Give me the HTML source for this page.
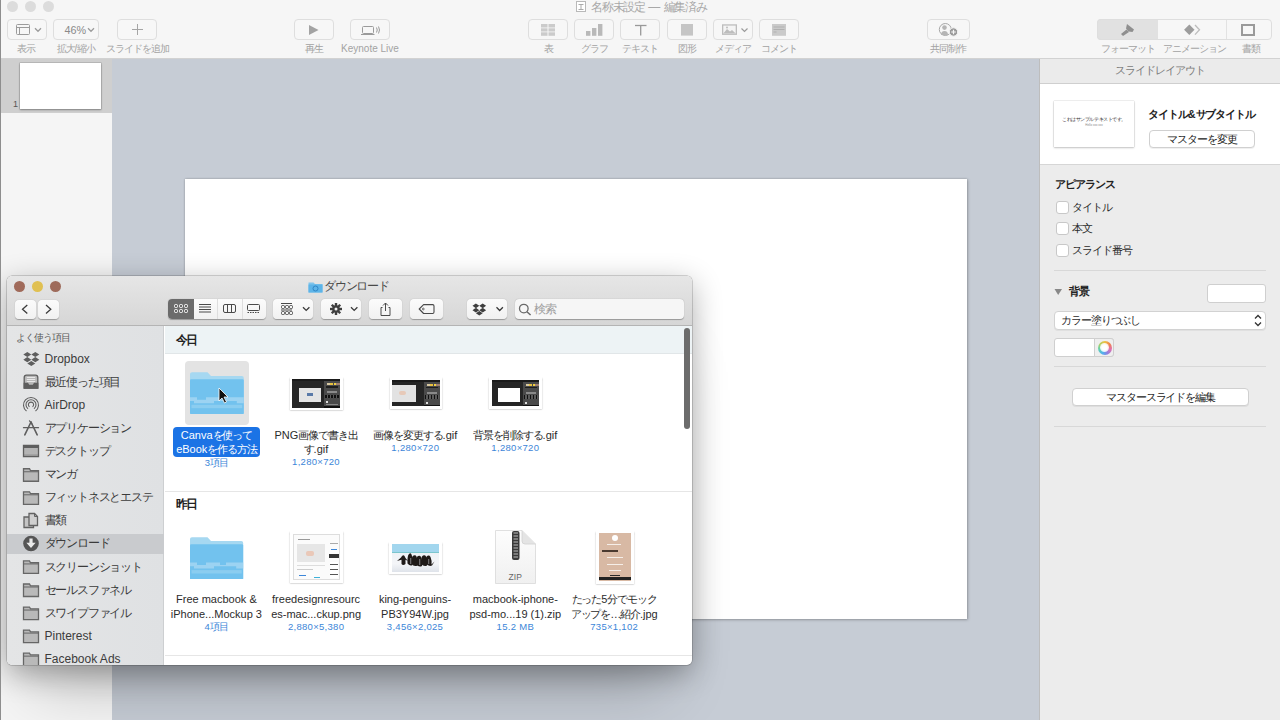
<!DOCTYPE html>
<html><head><meta charset="utf-8">
<style>
*{box-sizing:border-box;margin:0;padding:0}
html,body{width:1280px;height:720px;overflow:hidden}
body{position:relative;background:#c6ccd5;font-family:"Liberation Sans",sans-serif;color:#222}
.a{position:absolute}
.j{letter-spacing:-0.1em}
/* keynote toolbar */
#tb{left:0;top:0;width:1280px;height:59px;background:#f6f6f6;border-bottom:1px solid #d2d2d2}
#lborder{left:0;top:0;width:1px;height:720px;background:#8e8e8e;z-index:50}
.tl{width:11px;height:11px;border-radius:50%;background:#dcdcdc;top:1px}
.btn{height:21px;top:19px;border:1px solid #dedede;border-radius:4px;background:#f7f7f7}
.lbl{top:42px;font-size:10px;color:#a3a3a3;white-space:nowrap;text-align:center;line-height:13px}
#title{left:591px;top:0;font-size:12px;color:#a8a8a8;line-height:14px;white-space:nowrap}
/* navigator */
#nav{left:1px;top:59px;width:111px;height:661px;background:#f5f5f5}
#navsel{left:1px;top:59px;width:111px;height:54px;background:#cfcfcf}
#thumb{left:20px;top:63px;width:81px;height:46px;background:#fff;box-shadow:0 0 0 0.5px rgba(0,0,0,.2),0 1px 2px rgba(0,0,0,.3)}
/* inspector */
#insp{left:1039px;top:59px;width:241px;height:661px;background:#ececec;border-left:1px solid #bdbdbd}
#inhead{left:1040px;top:59px;width:240px;height:25px;background:#ebebeb;border-bottom:1px solid #cfcfcf;font-size:11px;color:#7a7a7a;text-align:center;line-height:23px}
#inwhite{left:1040px;top:84px;width:240px;height:81px;background:#fff;border-bottom:1px solid #d6d6d6}
.sep{height:1px;background:#d8d8d8}
.cb{width:13px;height:13px;border:1px solid #c8c8c8;border-radius:3px;background:#fff}
.ilbl{font-size:11px;color:#2a2a2a;white-space:nowrap;line-height:13px}
.ibtn{background:#fff;border:1px solid #d0d0d0;border-radius:4px;font-size:11px;color:#222;text-align:center;box-shadow:0 1px 0 rgba(0,0,0,.06)}
/* slide */
#slide{left:185px;top:179px;width:782px;height:440px;background:#fff;box-shadow:0 0 2px rgba(0,0,0,.25),1px 1px 3px rgba(0,0,0,.2)}
</style></head><body>
<div id="lborder" class="a"></div>
<div id="tb" class="a"></div>
<div class="a tl" style="left:7px"></div>
<div class="a tl" style="left:25px"></div>
<div class="a tl" style="left:43px"></div>
<div id="title" class="a"><span class="j">名称未設定</span> — <span class="j">編集済み</span></div>

<div class="a btn" style="left:7px;width:40px"></div>
<div class="a btn" style="left:53px;width:46px"></div>
<div class="a btn" style="left:117px;width:40px"></div>
<div class="a lbl" style="left:6px;width:40px"><span class="j">表示</span></div>
<div class="a lbl" style="left:46px;width:60px"><span class="j">拡大</span>/<span class="j">縮小</span></div>
<div class="a lbl" style="left:97px;width:80px"><span class="j">スライドを追加</span></div>

<div class="a btn" style="left:294px;width:40px"></div>
<div class="a btn" style="left:350px;width:40px"></div>
<div class="a lbl" style="left:294px;width:40px"><span class="j">再生</span></div>
<div class="a lbl" style="left:330px;width:80px">Keynote Live</div>

<div class="a btn" style="left:528px;width:40px"></div>
<div class="a btn" style="left:574px;width:40px"></div>
<div class="a btn" style="left:620px;width:40px"></div>
<div class="a btn" style="left:667px;width:40px"></div>
<div class="a btn" style="left:713px;width:40px"></div>
<div class="a btn" style="left:759px;width:40px"></div>
<div class="a lbl" style="left:528px;width:40px"><span class="j">表</span></div>
<div class="a lbl" style="left:564px;width:60px"><span class="j">グラフ</span></div>
<div class="a lbl" style="left:610px;width:60px"><span class="j">テキスト</span></div>
<div class="a lbl" style="left:657px;width:60px"><span class="j">図形</span></div>
<div class="a lbl" style="left:703px;width:60px"><span class="j">メディア</span></div>
<div class="a lbl" style="left:749px;width:60px"><span class="j">コメント</span></div>

<div class="a btn" style="left:927px;width:43px"></div>
<div class="a lbl" style="left:918px;width:60px"><span class="j">共同制作</span></div>

<div class="a btn" style="left:1097px;width:175px"></div>
<div class="a lbl" style="left:1093px;width:70px"><span class="j">フォーマット</span></div>
<div class="a lbl" style="left:1154px;width:80px"><span class="j">アニメーション</span></div>
<div class="a lbl" style="left:1226px;width:50px"><span class="j">書類</span></div>


<div class="a" style="left:1097px;top:19px;width:61px;height:21px;background:#e1e1e1;border:1px solid #dedede;border-right:none;border-radius:4px 0 0 4px"></div>
<!-- toolbar icons -->
<svg class="a" style="left:0;top:0" width="1280" height="58" viewBox="0 0 1280 58">
 <g fill="none" stroke="#9b9b9b" stroke-width="1">
  <!-- <span class="j">表示</span> -->
  <rect x="16.5" y="24.5" width="13" height="10" rx="1"/>
  <line x1="16.5" y1="27.5" x2="29.5" y2="27.5"/>
  <line x1="19.5" y1="27.5" x2="19.5" y2="34.5"/>
  <polyline points="35,28.3 38,31.3 41,28.3" stroke-width="1.3"/>
  <!-- 46% chevron -->
  <polyline points="88,28.3 91,31.3 94,28.3" stroke-width="1.3"/>
  <!-- plus -->
  <line x1="137.5" y1="24" x2="137.5" y2="35" stroke="#a5a5a5"/>
  <line x1="132" y1="29.5" x2="143" y2="29.5" stroke="#a5a5a5"/>
  <!-- keynote live laptop -->
  <rect x="362.5" y="26.5" width="11" height="7" rx="1"/>
  <line x1="361" y1="34.5" x2="374.5" y2="34.5"/>
  <path d="M376.5 27.5 Q378 30 376.5 32.5" />
  <path d="M378.5 26.5 Q380.5 30 378.5 33.5" />
  <!-- T -->
  <line x1="635" y1="25.5" x2="646.5" y2="25.5" stroke="#999" stroke-width="1.3"/>
  <line x1="640.7" y1="25.5" x2="640.7" y2="35.5" stroke="#999" stroke-width="1.3"/>
  <!-- media chevron -->
  <polyline points="741.5,28.5 744.5,31.5 747.5,28.5" stroke-width="1.2"/>
  <!-- <span class="j">書類</span> -->
  <rect x="1242" y="25" width="12" height="10" stroke="#9a9a9a" stroke-width="2"/>
  <!-- collab -->
  <circle cx="945.3" cy="29.5" r="6" stroke="#a8a8a8"/>
 </g>
 <!-- play -->
 <path d="M309 25 L318.5 30 L309 35 Z" fill="#a3a3a3"/>
 <!-- <span class="j">表</span> grid -->
 <g fill="#cbcbcb">
  <rect x="541" y="24" width="6.5" height="3.5"/><rect x="548.5" y="24" width="6.5" height="3.5"/>
  <rect x="541" y="28.3" width="6.5" height="3.2"/><rect x="548.5" y="28.3" width="6.5" height="3.2"/>
  <rect x="541" y="32.3" width="6.5" height="3.5"/><rect x="548.5" y="32.3" width="6.5" height="3.5"/>
 </g>
 <!-- graph bars -->
 <g fill="#b9b9b9">
  <rect x="586" y="31" width="4.4" height="4.8"/>
  <rect x="592" y="28" width="4.4" height="7.8"/>
  <rect x="598" y="24" width="4.4" height="11.8"/>
 </g>
 <!-- shape -->
 <rect x="681" y="24" width="12" height="11.6" fill="#c5c5c5"/>
 <!-- media -->
 <rect x="722" y="24.3" width="15" height="10.6" fill="#bdbdbd"/>
 <rect x="723.3" y="25.6" width="12.4" height="8" fill="#f4f4f4"/>
 <path d="M723.3 33.6 L727 29 L730 31.5 L732 30 L735.7 33.6 Z" fill="#bdbdbd"/>
 <circle cx="727" cy="27.6" r="1" fill="#bdbdbd"/>
 <!-- comment -->
 <rect x="772" y="24" width="14" height="11.8" fill="#cacaca"/>
 <g fill="#b0b0b0"><rect x="773.5" y="26.5" width="11" height="1"/><rect x="773.5" y="29" width="11" height="1"/><rect x="773.5" y="31.5" width="3" height="1"/></g>
 <!-- collab person -->
 <circle cx="944.5" cy="27.6" r="2.3" fill="#b5b5b5"/>
 <path d="M941 35 Q941 31 944.5 31 Q948 31 948 35 Z" fill="#b5b5b5"/>
 <circle cx="953.5" cy="32" r="4.2" fill="#9a9a9a" stroke="#f6f6f6" stroke-width="1"/>
 <path d="M953.5 29.7 V34.3 M951.2 32 H955.8" stroke="#f6f6f6" stroke-width="1.2"/>
 <!-- paintbrush -->
 <g fill="#8f8f8f">
  <path d="M1127 24 L1134 29.5 L1132.5 32 L1128.5 31.5 L1126 28.5 Z"/>
  <path d="M1126.5 29.5 L1129 32 L1123 36 L1121 34 Z"/>
 </g>
 <!-- diamond -->
 <path d="M1189.3 24.6 L1194.5 29.8 L1189.3 35 L1184.1 29.8 Z" fill="#9d9d9d"/>
 <polyline points="1195,25 1199.5,29.8 1195,34.6" fill="none" stroke="#bdbdbd" stroke-width="1.3"/>
 <!-- title doc icon -->
 <rect x="576.5" y="1.5" width="9" height="10" fill="#fff" stroke="#b9b9b9"/>
 <path d="M578.5 4.5 h5 M581 4.5 v5 M578.5 9.5 h5" stroke="#aaa" stroke-width="1" fill="none"/>
</svg>
<div class="a" style="left:64.5px;top:23.5px;font-size:10.8px;color:#8a8a8a;line-height:13px">46%</div>
<div class="a" style="left:1226px;top:20px;width:1px;height:19px;background:#e2e2e2"></div>

<div id="nav" class="a"></div>
<div id="navsel" class="a"></div>
<div id="thumb" class="a"></div>
<div class="a" style="left:13px;top:100px;font-size:9px;color:#555;line-height:9px">1</div>

<div id="insp" class="a"></div>
<div id="inhead" class="a"><span class="j">スライドレイアウト</span></div>
<div id="inwhite" class="a"></div>


<!-- inspector content -->
<div class="a" style="left:1054px;top:101px;width:80px;height:46px;background:#fff;box-shadow:0 0 1px rgba(0,0,0,.35),0 1px 2px rgba(0,0,0,.2)"></div>
<div class="a" style="left:1054px;top:117px;width:80px;text-align:center;font-size:4.5px;color:#333;line-height:6px;white-space:nowrap"><span class="j">これはサンプルテキストです。</span></div>
<div class="a" style="left:1054px;top:123px;width:80px;text-align:center;font-size:3px;color:#888;line-height:4px">Hello xxx xxx</div>
<div class="a ilbl" style="left:1148px;top:106.5px;font-size:10.8px;font-weight:bold;color:#222;line-height:14px"><span class="j">タイトル</span>&amp;<span class="j">サブタイトル</span></div>
<div class="a ibtn" style="left:1149px;top:130px;width:106px;height:18px;line-height:16px"><span class="j">マスターを変更</span></div>

<div class="a ilbl" style="left:1055px;top:178px;font-weight:bold;color:#222"><span class="j">アピアランス</span></div>
<div class="a cb" style="left:1056px;top:201px"></div>
<div class="a ilbl" style="left:1072px;top:201px"><span class="j">タイトル</span></div>
<div class="a cb" style="left:1056px;top:222px"></div>
<div class="a ilbl" style="left:1072px;top:222px"><span class="j">本文</span></div>
<div class="a cb" style="left:1056px;top:244px"></div>
<div class="a ilbl" style="left:1072px;top:244px"><span class="j">スライド番号</span></div>
<div class="a sep" style="left:1054px;top:270px;width:212px"></div>

<svg class="a" style="left:1054px;top:288px" width="9" height="8"><path d="M0.5 1 L8 1 L4.2 7 Z" fill="#888"/></svg>
<div class="a ilbl" style="left:1069px;top:285px;font-weight:bold;color:#222"><span class="j">背景</span></div>
<div class="a" style="left:1207px;top:284px;width:59px;height:19px;background:#fff;border:1px solid #cfcfcf;border-radius:3px"></div>
<div class="a" style="left:1054px;top:311px;width:212px;height:19px;background:#fff;border:1px solid #d2d2d2;border-radius:4px;box-shadow:0 1px 0 rgba(0,0,0,.05)"></div>
<div class="a ilbl" style="left:1061px;top:314px"><span class="j">カラー塗りつぶし</span></div>
<svg class="a" style="left:1253px;top:313px" width="10" height="15"><polyline points="2,5.5 5,2.5 8,5.5" fill="none" stroke="#333" stroke-width="1.3"/><polyline points="2,9.5 5,12.5 8,9.5" fill="none" stroke="#333" stroke-width="1.3"/></svg>
<div class="a" style="left:1054px;top:338px;width:60px;height:19px;background:#fff;border:1px solid #cfcfcf;border-radius:3px"></div>
<div class="a" style="left:1094px;top:338px;width:20px;height:19px;background:#efefef;border:1px solid #cfcfcf;border-radius:0 3px 3px 0"></div>
<div class="a" style="left:1097.5px;top:340.5px;width:14px;height:14px;border-radius:50%;background:conic-gradient(#f0c040,#f08050,#e070b0,#9080e0,#50b0f0,#60d0b0,#b0d060,#f0c040)"></div><div class="a" style="left:1100px;top:343px;width:9px;height:9px;border-radius:50%;background:radial-gradient(#fff 40%,rgba(255,255,255,.6))"></div>
<div class="a sep" style="left:1054px;top:366px;width:212px"></div>
<div class="a ibtn" style="left:1072px;top:388px;width:177px;height:18px;line-height:16px"><span class="j">マスタースライドを編集</span></div>
<div class="a sep" style="left:1054px;top:426px;width:212px"></div>

<div id="slide" class="a"></div>
<!--FINDER-->
<div id="fw" class="a" style="left:7px;top:276px;width:685px;height:389px;border-radius:5px 5px 5px 5px;overflow:hidden;box-shadow:0 0 0 0.5px rgba(0,0,0,.3),0 8px 30px rgba(0,0,0,.32),0 50px 60px -25px rgba(0,0,0,.2);background:#fff">
<div class="a" style="left:0;top:0;width:685px;height:50px;background:linear-gradient(#e6e6e6,#d6d6d6);border-bottom:1px solid #b4b4b4"></div>
<div class="a" style="left:6.9px;top:5.2px;width:11px;height:11px;border-radius:50%;background:#a06a5a"></div>
<div class="a" style="left:24.9px;top:5.2px;width:11px;height:11px;border-radius:50%;background:#e0c052"></div>
<div class="a" style="left:42.7px;top:5.2px;width:11px;height:11px;border-radius:50%;background:#9e6b5b"></div>
<svg class="a" style="left:300.5px;top:4.5px" width="15" height="12"><path d="M0.5 1.5 h5 l1.5 1.5 h7.5 v8.5 h-14 Z" fill="#7fc4ec"/><path d="M0.5 3.5 h14 v8 h-14 Z" fill="#5db4e8"/><circle cx="7.5" cy="7.5" r="2.5" fill="none" stroke="#2f86c6" stroke-width="1"/></svg>
<div class="a" style="left:317px;top:3px;font-size:12px;line-height:14px;color:#4a4a4a;white-space:nowrap"><span class="j">ダウンロード</span></div>
<div class="a" style="left:7.5px;top:23.5px;width:21px;height:19px;background:linear-gradient(#fbfbfb,#f1f1f1);border-radius:4px;box-shadow:0 0.5px 1px rgba(0,0,0,.3)"></div>
<div class="a" style="left:31px;top:23.5px;width:21px;height:19px;background:linear-gradient(#fbfbfb,#f1f1f1);border-radius:4px;box-shadow:0 0.5px 1px rgba(0,0,0,.3)"></div>
<svg class="a" style="left:0;top:0" width="685" height="50"><g fill="none" stroke="#3c3c3c" stroke-width="1.3"><polyline points="20.3,29 15.5,33.3 20.3,37.6"/><polyline points="39,29 43.8,33.3 39,37.6"/></g></svg>
<div class="a" style="left:161px;top:23px;width:97.5px;height:19.5px;background:linear-gradient(#fbfbfb,#f1f1f1);border-radius:4px;box-shadow:0 0.5px 1px rgba(0,0,0,.3)"></div>
<div class="a" style="left:161px;top:23px;width:25.5px;height:19.5px;background:#6b6b6b;border-radius:4px 0 0 4px"></div>
<div class="a" style="left:210.4px;top:23px;width:1px;height:19.5px;background:#dedede"></div>
<div class="a" style="left:234.5px;top:23px;width:1px;height:19.5px;background:#dedede"></div>
<div class="a" style="left:266.2px;top:23px;width:40.3px;height:19.5px;background:linear-gradient(#fbfbfb,#f1f1f1);border-radius:4px;box-shadow:0 0.5px 1px rgba(0,0,0,.3)"></div>
<div class="a" style="left:314.2px;top:23px;width:40.3px;height:19.5px;background:linear-gradient(#fbfbfb,#f1f1f1);border-radius:4px;box-shadow:0 0.5px 1px rgba(0,0,0,.3)"></div>
<div class="a" style="left:362.3px;top:23px;width:32.7px;height:19.5px;background:linear-gradient(#fbfbfb,#f1f1f1);border-radius:4px;box-shadow:0 0.5px 1px rgba(0,0,0,.3)"></div>
<div class="a" style="left:403px;top:23px;width:33px;height:19.5px;background:linear-gradient(#fbfbfb,#f1f1f1);border-radius:4px;box-shadow:0 0.5px 1px rgba(0,0,0,.3)"></div>
<div class="a" style="left:459.8px;top:23px;width:40px;height:19.5px;background:linear-gradient(#fbfbfb,#f1f1f1);border-radius:4px;box-shadow:0 0.5px 1px rgba(0,0,0,.3)"></div>
<div class="a" style="left:508.3px;top:23px;width:169px;height:19.5px;background:#f6f6f6;border-radius:4px;box-shadow:0 0.5px 1px rgba(0,0,0,.3)"></div>
<div class="a" style="left:527px;top:25.5px;font-size:11.5px;line-height:14px;color:#a0a0a0"><span class="j">検索</span></div>
<svg class="a" style="left:0;top:0" width="685" height="50">
 <g fill="none" stroke="#fff" stroke-width="1">
  <rect x="167.5" y="28.5" width="3" height="3" rx="1"/><rect x="172.5" y="28.5" width="3" height="3" rx="1"/><rect x="177.5" y="28.5" width="3" height="3" rx="1"/>
  <rect x="167.5" y="33.5" width="3" height="3" rx="1"/><rect x="172.5" y="33.5" width="3" height="3" rx="1"/><rect x="177.5" y="33.5" width="3" height="3" rx="1"/>
 </g>
 <g fill="none" stroke="#4a4a4a" stroke-width="1">
  <line x1="192" y1="28.5" x2="204" y2="28.5"/><line x1="192" y1="31" x2="204" y2="31"/><line x1="192" y1="33.5" x2="204" y2="33.5"/><line x1="192" y1="36" x2="204" y2="36"/>
  <rect x="216.5" y="28.5" width="12" height="8" rx="1.5"/><line x1="220.5" y1="28.5" x2="220.5" y2="36.5"/><line x1="224.5" y1="28.5" x2="224.5" y2="36.5"/>
  <rect x="240.5" y="28.5" width="12" height="6" rx="1"/><line x1="240.5" y1="36.5" x2="252.5" y2="36.5" stroke-dasharray="1.5 1"/>
  <line x1="274" y1="27.5" x2="285" y2="27.5"/>
  <rect x="274.5" y="29.5" width="3" height="3" rx="1"/><rect x="278.5" y="29.5" width="3" height="3" rx="1"/><rect x="282.5" y="29.5" width="3" height="3" rx="1"/>
  <line x1="274" y1="34" x2="285" y2="34"/>
  <rect x="274.5" y="35.5" width="3" height="3" rx="1"/><rect x="278.5" y="35.5" width="3" height="3" rx="1"/><rect x="282.5" y="35.5" width="3" height="3" rx="1"/>
  <polyline points="296,31.2 299.2,34.4 302.4,31.2" stroke-width="1.3" stroke="#3a3a3a"/>
  <polyline points="344,31.2 347.2,34.4 350.4,31.2" stroke-width="1.3" stroke="#3a3a3a"/>
  <path d="M375.5 31.5 h-1.5 v8 h9 v-8 h-1.5" />
  <line x1="378.5" y1="27" x2="378.5" y2="35"/>
  <polyline points="376,29.5 378.5,27 381,29.5"/>
  <path d="M412.2 33 L416.6 28.6 H425.6 Q427 28.6 427 30 V36.1 Q427 37.5 425.6 37.5 H416.6 Z" stroke-linejoin="round" stroke-width="1.1"/><circle cx="416.3" cy="33" r="0.9" stroke-width="0.8"/>
  <polyline points="489.5,31.3 492.7,34.5 495.9,31.3" stroke-width="1.3" stroke="#3a3a3a"/>
  <circle cx="516.8" cy="32.6" r="4.3" stroke="#6a6a6a" stroke-width="1.3"/><line x1="519.9" y1="35.7" x2="523.6" y2="39" stroke="#6a6a6a" stroke-width="1.5"/>
 </g>
 <g fill="#3f3f3f">
  <circle cx="329" cy="33" r="3.8"/>
  <g transform="translate(329 33)">
   <rect x="-1.2" y="-6" width="2.4" height="12"/><rect x="-1.2" y="-6" width="2.4" height="12" transform="rotate(45)"/><rect x="-1.2" y="-6" width="2.4" height="12" transform="rotate(90)"/><rect x="-1.2" y="-6" width="2.4" height="12" transform="rotate(135)"/>
  </g>
  <path d="M465.5 29.8 l3.4 -2.4 l3.4 2.4 l-3.4 2.4 Z M472.3 29.8 l3.4 -2.4 l3.4 2.4 l-3.4 2.4 Z M465.5 34.2 l3.4 -2.4 l3.4 2.4 l-3.4 2.4 Z M472.3 34.2 l3.4 -2.4 l3.4 2.4 l-3.4 2.4 Z M468.9 37.2 l3.4 -2.2 l3.4 2.2 l-3.4 2.2 Z"/>
 </g>
 <circle cx="329" cy="33" r="1.5" fill="#f3f3f3"/>
</svg>
<div class="a" style="left:0;top:50px;width:157px;height:339px;background:linear-gradient(90deg,#e4e5e6,#dfe1e3);border-right:1px solid #cdcfd1"></div>
<div class="a" style="left:9px;top:56px;font-size:10px;line-height:12px;color:#5a5a5a;white-space:nowrap"><span class="j">よく使う項目</span></div>
<div class="a" style="left:0;top:257.5px;width:157px;height:20.5px;background:#c9cbce"></div>
<div class="a" style="left:37.5px;top:76.0px;font-size:12px;line-height:15px;color:#3b3b3b;white-space:nowrap">Dropbox</div>
<div class="a" style="left:37.5px;top:99.1px;font-size:12px;line-height:15px;color:#3b3b3b;white-space:nowrap"><span class="j">最近使った項目</span></div>
<div class="a" style="left:37.5px;top:122.1px;font-size:12px;line-height:15px;color:#3b3b3b;white-space:nowrap">AirDrop</div>
<div class="a" style="left:37.5px;top:145.1px;font-size:12px;line-height:15px;color:#3b3b3b;white-space:nowrap"><span class="j">アプリケーション</span></div>
<div class="a" style="left:37.5px;top:168.2px;font-size:12px;line-height:15px;color:#3b3b3b;white-space:nowrap"><span class="j">デスクトップ</span></div>
<div class="a" style="left:37.5px;top:191.2px;font-size:12px;line-height:15px;color:#3b3b3b;white-space:nowrap"><span class="j">マンガ</span></div>
<div class="a" style="left:37.5px;top:214.3px;font-size:12px;line-height:15px;color:#3b3b3b;white-space:nowrap"><span class="j">フィットネスとエステ</span></div>
<div class="a" style="left:37.5px;top:237.4px;font-size:12px;line-height:15px;color:#3b3b3b;white-space:nowrap"><span class="j">書類</span></div>
<div class="a" style="left:37.5px;top:260.4px;font-size:12px;line-height:15px;color:#3b3b3b;white-space:nowrap"><span class="j">ダウンロード</span></div>
<div class="a" style="left:37.5px;top:283.5px;font-size:12px;line-height:15px;color:#3b3b3b;white-space:nowrap"><span class="j">スクリーンショット</span></div>
<div class="a" style="left:37.5px;top:306.5px;font-size:12px;line-height:15px;color:#3b3b3b;white-space:nowrap"><span class="j">セールスファネル</span></div>
<div class="a" style="left:37.5px;top:329.5px;font-size:12px;line-height:15px;color:#3b3b3b;white-space:nowrap"><span class="j">スワイプファイル</span></div>
<div class="a" style="left:37.5px;top:352.6px;font-size:12px;line-height:15px;color:#3b3b3b;white-space:nowrap">Pinterest</div>
<div class="a" style="left:37.5px;top:375.7px;font-size:12px;line-height:15px;color:#3b3b3b;white-space:nowrap">Facebook Ads</div>
<svg class="a" style="left:0;top:50px" width="157" height="339"><g fill="#5e5e5e" stroke="#5e5e5e"><path stroke="none" d="M16.3 28.5 l4 -2.6 l4 2.6 l-4 2.6 Z M24.3 28.5 l4 -2.6 l4 2.6 l-4 2.6 Z M16.3 33.7 l4 -2.6 l4 2.6 l-4 2.6 Z M24.3 33.7 l4 -2.6 l4 2.6 l-4 2.6 Z M20.3 37.5 l4 -2.6 l4 2.6 l-4 2.6 Z"/><path fill="#b8b8b8" stroke="#5e5e5e" stroke-width="1.3" d="M17.2 62.2 V51.5 Q17.2 49.2 19.5 49.2 H28.5 Q30.8 49.2 30.8 51.5 V62.2 Z"/><path stroke="none" fill="#5e5e5e" d="M16.6 56.8 h4.4 l1.2 2 h3.6 l1.2 -2 h4.4 v6 h-14.8 Z"/><path fill="none" stroke="#e8e8e8" stroke-width="1" d="M19.8 51.5 h8.4 M19.8 53.5 h8.4 M19.8 55.5 h8.4"/><g fill="none" stroke-width="1.1"><path d="M19.5 85 A7.5 7.5 0 1 1 28.5 85"/><path d="M21 82.8 A5 5 0 1 1 27 82.8"/><path d="M22.5 80.8 A2.6 2.6 0 1 1 25.5 80.8"/></g><g fill="none" stroke-width="1.6" stroke-linecap="round"><path d="M17.8 108.8 L24 96"/><path d="M24 96 L30.2 108.8"/><path d="M16.5 101.7 H31.5" stroke-width="1.3"/><path d="M22.5 94.8 L25 98" stroke-width="1.2"/></g><path fill="#b4b4b4" stroke="#5e5e5e" stroke-width="1.3" d="M16.5 119.5 h15 v11 h-15 Z"/><rect stroke="none" x="16.5" y="119.5" width="15" height="2.5"/><path fill="none" stroke="#777" stroke-width="0.8" stroke-dasharray="1 1" d="M17.5 128.8 h13"/><path fill="#b9b9b9" stroke="#666" stroke-width="1.3" d="M16.5 142.75 h6 l1 1.8 h8 v10.7 h-15 Z"/><path fill="none" stroke="#666" stroke-width="1" d="M16.5 145.75 h15"/><path fill="#b9b9b9" stroke="#666" stroke-width="1.3" d="M16.5 165.8 h6 l1 1.8 h8 v10.7 h-15 Z"/><path fill="none" stroke="#666" stroke-width="1" d="M16.5 168.8 h15"/><path fill="#b9b9b9" stroke="#666" stroke-width="1.3" d="M16.5 234.95000000000005 h6 l1 1.8 h8 v10.7 h-15 Z"/><path fill="none" stroke="#666" stroke-width="1" d="M16.5 237.95000000000005 h15"/><path fill="#b9b9b9" stroke="#666" stroke-width="1.3" d="M16.5 258.0 h6 l1 1.8 h8 v10.7 h-15 Z"/><path fill="none" stroke="#666" stroke-width="1" d="M16.5 261.0 h15"/><path fill="#b9b9b9" stroke="#666" stroke-width="1.3" d="M16.5 281.04999999999995 h6 l1 1.8 h8 v10.7 h-15 Z"/><path fill="none" stroke="#666" stroke-width="1" d="M16.5 284.04999999999995 h15"/><path fill="#b9b9b9" stroke="#666" stroke-width="1.3" d="M16.5 304.1 h6 l1 1.8 h8 v10.7 h-15 Z"/><path fill="none" stroke="#666" stroke-width="1" d="M16.5 307.1 h15"/><path fill="#b9b9b9" stroke="#666" stroke-width="1.3" d="M16.5 327.1500000000001 h6 l1 1.8 h8 v10.7 h-15 Z"/><path fill="none" stroke="#666" stroke-width="1" d="M16.5 330.1500000000001 h15"/><path fill="#c4c4c4" stroke="#626262" stroke-width="1.3" d="M17 191 h6.5 l3 3 v7.5 h-9.5 Z"/><path fill="#d0d0d0" stroke="#626262" stroke-width="1.3" d="M22 187.5 h5.5 l3 3 v9 h-8.5 Z"/><path fill="none" stroke="#626262" stroke-width="1" d="M27.5 187.5 v3 h3"/><circle stroke="none" cx="24" cy="217.5" r="7.8" fill="#555"/><path fill="#eaeaea" stroke="none" d="M22.4 212.5 h3.2 v4.2 h3 l-4.6 5.2 l-4.6 -5.2 h3 Z"/></g></svg>
<div class="a" style="left:157.5px;top:50px;width:527.5px;height:28px;background:#edf3f5;border-bottom:1px solid #e1e6e8"></div>
<div class="a" style="left:168.5px;top:56.5px;font-size:12px;font-weight:bold;line-height:15px;color:#222"><span class="j">今日</span></div>
<div class="a" style="left:157.5px;top:214.5px;width:527.5px;height:1px;background:#e6e6e6"></div>
<div class="a" style="left:168.5px;top:221px;font-size:12px;font-weight:bold;line-height:15px;color:#222"><span class="j">昨日</span></div>
<div class="a" style="left:157.5px;top:378.5px;width:527.5px;height:1px;background:#e6e6e6"></div>
<div class="a" style="left:676.6px;top:51.5px;width:6px;height:101px;background:#6c6c6c;border-radius:3px"></div>
<div class="a" style="left:178.2px;top:85.39999999999998px;width:63.4px;height:64px;background:#e3e3e3;border-radius:4px"></div>
<div class="a" style="left:166.2px;top:151px;width:86.6px;height:30px;background:#1b73e5;border-radius:4px"></div>
<div class="a" style="left:149.5px;top:151.89999999999998px;width:120px;text-align:center;font-size:11px;line-height:14px;color:#fff;white-space:nowrap">Canva<span class="j">を使って</span></div><div class="a" style="left:149.5px;top:166.29999999999995px;width:120px;text-align:center;font-size:11px;line-height:14px;color:#fff;white-space:nowrap">eBook<span class="j">を作る方法</span></div><div class="a" style="left:149.5px;top:180.7px;width:120px;text-align:center;font-size:9.5px;line-height:12px;color:#3c86d8;white-space:nowrap;letter-spacing:0.3px">3<span class="j">項目</span></div>
<div class="a" style="left:249px;top:151.60000000000002px;width:120px;text-align:center;font-size:11px;line-height:14px;color:#2b2b2b;white-space:nowrap">PNG<span class="j">画像で書き出</span></div><div class="a" style="left:249px;top:166.0px;width:120px;text-align:center;font-size:11px;line-height:14px;color:#2b2b2b;white-space:nowrap"><span class="j">す</span>.gif</div><div class="a" style="left:249px;top:180.40000000000003px;width:120px;text-align:center;font-size:9.5px;line-height:12px;color:#3c86d8;white-space:nowrap;letter-spacing:0.3px">1,280×720</div>
<div class="a" style="left:348.3px;top:151.8px;width:120px;text-align:center;font-size:11px;line-height:14px;color:#2b2b2b;white-space:nowrap"><span class="j">画像を変更する</span>.gif</div><div class="a" style="left:348.3px;top:166.10000000000002px;width:120px;text-align:center;font-size:9.5px;line-height:12px;color:#3c86d8;white-space:nowrap;letter-spacing:0.3px">1,280×720</div>
<div class="a" style="left:448.29999999999995px;top:151.8px;width:120px;text-align:center;font-size:11px;line-height:14px;color:#2b2b2b;white-space:nowrap"><span class="j">背景を削除する</span>.gif</div><div class="a" style="left:448.29999999999995px;top:166.10000000000002px;width:120px;text-align:center;font-size:9.5px;line-height:12px;color:#3c86d8;white-space:nowrap;letter-spacing:0.3px">1,280×720</div>
<div class="a" style="left:149.4px;top:316.29999999999995px;width:120px;text-align:center;font-size:11px;line-height:14px;color:#2b2b2b;white-space:nowrap">Free macbook &</div><div class="a" style="left:149.4px;top:330.69999999999993px;width:120px;text-align:center;font-size:11px;line-height:14px;color:#2b2b2b;white-space:nowrap">iPhone...Mockup 3</div><div class="a" style="left:149.4px;top:345.0999999999999px;width:120px;text-align:center;font-size:9.5px;line-height:12px;color:#3c86d8;white-space:nowrap;letter-spacing:0.3px">4<span class="j">項目</span></div>
<div class="a" style="left:249.10000000000002px;top:316.29999999999995px;width:120px;text-align:center;font-size:11px;line-height:14px;color:#2b2b2b;white-space:nowrap">freedesignresourc</div><div class="a" style="left:249.10000000000002px;top:330.69999999999993px;width:120px;text-align:center;font-size:11px;line-height:14px;color:#2b2b2b;white-space:nowrap">es-mac...ckup.png</div><div class="a" style="left:249.10000000000002px;top:345.0999999999999px;width:120px;text-align:center;font-size:9.5px;line-height:12px;color:#3c86d8;white-space:nowrap;letter-spacing:0.3px">2,880×5,380</div>
<div class="a" style="left:348px;top:316.29999999999995px;width:120px;text-align:center;font-size:11px;line-height:14px;color:#2b2b2b;white-space:nowrap">king-penguins-</div><div class="a" style="left:348px;top:330.69999999999993px;width:120px;text-align:center;font-size:11px;line-height:14px;color:#2b2b2b;white-space:nowrap">PB3Y94W.jpg</div><div class="a" style="left:348px;top:345.0999999999999px;width:120px;text-align:center;font-size:9.5px;line-height:12px;color:#3c86d8;white-space:nowrap;letter-spacing:0.3px">3,456×2,025</div>
<div class="a" style="left:448.29999999999995px;top:316.29999999999995px;width:120px;text-align:center;font-size:11px;line-height:14px;color:#2b2b2b;white-space:nowrap">macbook-iphone-</div><div class="a" style="left:448.29999999999995px;top:330.69999999999993px;width:120px;text-align:center;font-size:11px;line-height:14px;color:#2b2b2b;white-space:nowrap">psd-mo...19 (1).zip</div><div class="a" style="left:448.29999999999995px;top:345.0999999999999px;width:120px;text-align:center;font-size:9.5px;line-height:12px;color:#3c86d8;white-space:nowrap;letter-spacing:0.3px">15.2 MB</div>
<div class="a" style="left:547.2px;top:316.29999999999995px;width:120px;text-align:center;font-size:11px;line-height:14px;color:#2b2b2b;white-space:nowrap"><span class="j">たった</span>5<span class="j">分でモック</span></div><div class="a" style="left:547.2px;top:330.69999999999993px;width:120px;text-align:center;font-size:11px;line-height:14px;color:#2b2b2b;white-space:nowrap"><span class="j">アップを…紹介</span>.jpg</div><div class="a" style="left:547.2px;top:345.0999999999999px;width:120px;text-align:center;font-size:9.5px;line-height:12px;color:#3c86d8;white-space:nowrap;letter-spacing:0.3px">735×1,102</div>
<svg class="a" style="left:183px;top:96.30000000000001px" width="53.8" height="42.1" viewBox="0 0 53.8 42.1">
<path d="M0 2 Q0 0.3 2 0.3 H17.5 L21 4 H51.80000000000001 Q53.80000000000001 4 53.80000000000001 6 V41.099999999999966 Q53.80000000000001 42.099999999999966 52.80000000000001 42.099999999999966 H1 Q0 42.099999999999966 0 41.099999999999966 Z" fill="#a6d8f1"/>
<path d="M0 8.5 Q0 7.3 1.2 7.3 H52.60000000000001 Q53.80000000000001 7.3 53.80000000000001 8.5 V41.099999999999966 Q53.80000000000001 42.099999999999966 52.80000000000001 42.099999999999966 H1 Q0 42.099999999999966 0 41.099999999999966 Z" fill="#72c2ee"/>
<path d="M0 25.3 H7 V27.8 H16 V25.3 H30 V27.8 H36 V25.3 H53.80000000000001 V31.2 H46.80000000000001 V29.0 H24 V31.2 H4 V29.0 H0 Z" fill="#a3d6f2" opacity=".85"/>
<rect x="1.5" y="32.8" width="50.80000000000001" height="3.4" fill="#9dd3f1" opacity=".6"/>
</svg>
<svg class="a" style="left:183.4px;top:261px" width="53.2" height="42.4" viewBox="0 0 53.2 42.4">
<path d="M0 2 Q0 0.3 2 0.3 H17.5 L21 4 H51.19999999999999 Q53.19999999999999 4 53.19999999999999 6 V41.39999999999998 Q53.19999999999999 42.39999999999998 52.19999999999999 42.39999999999998 H1 Q0 42.39999999999998 0 41.39999999999998 Z" fill="#a6d8f1"/>
<path d="M0 8.5 Q0 7.3 1.2 7.3 H51.999999999999986 Q53.19999999999999 7.3 53.19999999999999 8.5 V41.39999999999998 Q53.19999999999999 42.39999999999998 52.19999999999999 42.39999999999998 H1 Q0 42.39999999999998 0 41.39999999999998 Z" fill="#72c2ee"/>
<path d="M0 25.4 H7 V28.0 H16 V25.4 H30 V28.0 H36 V25.4 H53.19999999999999 V31.4 H46.19999999999999 V29.3 H24 V31.4 H4 V29.3 H0 Z" fill="#a3d6f2" opacity=".85"/>
<rect x="1.5" y="33.1" width="50.19999999999999" height="3.4" fill="#9dd3f1" opacity=".6"/>
</svg>
<svg class="a" style="left:211px;top:111px" width="12" height="17"><path d="M1 1 V14 L4 11 L6.5 16 L8.5 15 L6 10 H10 Z" fill="#111" stroke="#fff" stroke-width="0.8"/></svg>
<div class="a" style="left:282.5px;top:100.6px;width:53.2px;height:33.5px;background:#fff;box-shadow:0 0.5px 1.5px rgba(0,0,0,.35)"><div class="a" style="left:2.5px;top:2.5px;width:48.2px;height:28.5px;background:#252525"><div class="a" style="left:6.5px;top:8.5px;width:22px;height:14px;background:#e4e4e4"><div class="a" style="left:8px;top:5px;width:6px;height:3px;background:#5a7aa8"></div></div><div class="a" style="left:0;top:0;width:100%;height:2px;background:#1a1a1a"></div><div class="a" style="right:0;top:2px;width:16.4px;height:26.5px;background:#4a4a4a"><div class="a" style="left:3px;top:2px;width:3px;height:2px;background:#d8c8a0"></div><div class="a" style="left:6px;top:2px;width:3px;height:2px;background:#e8c040"></div><div class="a" style="left:10px;top:2px;width:2px;height:2px;background:#f0d040"></div><div class="a" style="left:12px;top:2px;width:4px;height:2px;background:#a08070"></div><div class="a" style="left:2px;top:5px;width:12.4px;height:1.5px;background:#1e1e1e"></div><div class="a" style="left:3px;top:10px;width:10.4px;height:2px;background:#8a8a8a"></div><div class="a" style="left:1px;top:13.5px;width:14.4px;height:3.5px;background:repeating-linear-gradient(90deg,#111 0 1.5px,#5a5a5a 1.5px 3px)"></div><div class="a" style="left:2px;top:20px;width:2px;height:2px;background:#ddd"></div><div class="a" style="left:2px;top:23px;width:12.4px;height:1px;background:#888"></div><div class="a" style="left:0;bottom:0;width:100%;height:1.5px;background:#111"></div></div></div></div>
<div class="a" style="left:382.9px;top:101.4px;width:52.5px;height:31.6px;background:#fff;box-shadow:0 0.5px 1.5px rgba(0,0,0,.35)"><div class="a" style="left:2.5px;top:2.5px;width:47.5px;height:26.6px;background:#252525"><div class="a" style="left:0;top:5px;width:23.5px;height:17px;background:#e2e2e2"><div class="a" style="left:7px;top:6px;width:7px;height:4px;background:#e7c9b8;border-radius:2px"></div></div><div class="a" style="left:0;top:0;width:100%;height:2px;background:#1a1a1a"></div><div class="a" style="right:0;top:2px;width:16.2px;height:24.6px;background:#4a4a4a"><div class="a" style="left:3px;top:2px;width:3px;height:2px;background:#d8c8a0"></div><div class="a" style="left:6px;top:2px;width:3px;height:2px;background:#e8c040"></div><div class="a" style="left:10px;top:2px;width:2px;height:2px;background:#f0d040"></div><div class="a" style="left:12px;top:2px;width:4px;height:2px;background:#a08070"></div><div class="a" style="left:2px;top:5px;width:12.2px;height:1.5px;background:#1e1e1e"></div><div class="a" style="left:3px;top:10px;width:10.2px;height:2px;background:#8a8a8a"></div><div class="a" style="left:1px;top:13.5px;width:14.2px;height:3.5px;background:repeating-linear-gradient(90deg,#111 0 1.5px,#5a5a5a 1.5px 3px)"></div><div class="a" style="left:2px;top:20px;width:2px;height:2px;background:#ddd"></div><div class="a" style="left:2px;top:23px;width:12.2px;height:1px;background:#888"></div><div class="a" style="left:0;bottom:0;width:100%;height:1.5px;background:#111"></div></div></div></div>
<div class="a" style="left:482.0px;top:101.4px;width:52.9px;height:31.6px;background:#fff;box-shadow:0 0.5px 1.5px rgba(0,0,0,.35)"><div class="a" style="left:2.5px;top:2.5px;width:47.9px;height:26.6px;background:#252525"><div class="a" style="left:6px;top:8px;width:22.5px;height:14px;background:#fff"></div><div class="a" style="left:0;top:0;width:100%;height:2px;background:#1a1a1a"></div><div class="a" style="right:0;top:2px;width:16.3px;height:24.6px;background:#4a4a4a"><div class="a" style="left:3px;top:2px;width:3px;height:2px;background:#d8c8a0"></div><div class="a" style="left:6px;top:2px;width:3px;height:2px;background:#e8c040"></div><div class="a" style="left:10px;top:2px;width:2px;height:2px;background:#f0d040"></div><div class="a" style="left:12px;top:2px;width:4px;height:2px;background:#a08070"></div><div class="a" style="left:2px;top:5px;width:12.3px;height:1.5px;background:#1e1e1e"></div><div class="a" style="left:3px;top:10px;width:10.3px;height:2px;background:#8a8a8a"></div><div class="a" style="left:1px;top:13.5px;width:14.3px;height:3.5px;background:repeating-linear-gradient(90deg,#111 0 1.5px,#5a5a5a 1.5px 3px)"></div><div class="a" style="left:2px;top:20px;width:2px;height:2px;background:#ddd"></div><div class="a" style="left:2px;top:23px;width:12.3px;height:1px;background:#888"></div><div class="a" style="left:0;bottom:0;width:100%;height:1.5px;background:#111"></div></div></div></div>
<div class="a" style="left:282.6px;top:255.3px;width:53.7px;height:52.1px;background:#fff;box-shadow:0 0.5px 1.5px rgba(0,0,0,.35)"><div class="a" style="left:3px;top:3px;width:47.7px;height:46.1px;background:#fbfbfb;border:0.5px solid #ddd">
<div class="a" style="left:3px;top:8.5px;width:28.5px;height:18px;background:#e6e6e6"><div class="a" style="left:9px;top:7px;width:8px;height:5px;background:#eac8b8;border-radius:2px"></div></div>
<div class="a" style="left:4px;top:4px;width:12px;height:1px;background:#999"></div>
<div class="a" style="left:35.5px;top:18.5px;width:9.5px;height:4px;background:#333"></div>
<div class="a" style="left:36px;top:8px;width:8px;height:1px;background:#aaa"></div>
<div class="a" style="left:37px;top:14px;width:6px;height:1px;background:#3c86d8"></div>
<div class="a" style="left:3px;top:30px;width:28px;height:1px;background:#ddd"></div>
<div class="a" style="left:3px;top:34px;width:16px;height:1px;background:#ccc"></div>
<div class="a" style="left:5px;top:40px;width:7px;height:1px;background:#3c86d8"></div>
<div class="a" style="left:20px;top:42px;width:6px;height:1px;background:#3cb0d8"></div>
<div class="a" style="left:36px;top:27px;width:8px;height:16px;background:repeating-linear-gradient(#fff 0 2px,#555 2px 3px,#fff 3px 5px)"></div>
</div></div>
<div class="a" style="left:382.3px;top:265.5px;width:52.6px;height:32.9px;background:#fff;box-shadow:0 0.5px 1.5px rgba(0,0,0,.35)"><div class="a" style="left:2.5px;top:2.5px;width:47.6px;height:27.9px;background:linear-gradient(#a2d6ee 0,#a2d6ee 28%,#6cc0c8 30%,#eef2f6 33%,#f4f5f8 70%,#dfe3ea 100%)">
<svg class="a" style="left:0;top:0" width="48" height="28"><g fill="#1f1a18">
<path d="M5 17 L9 13.5 L10 12 Q11.5 10.5 12.5 12 L13.5 14 L16 17 L13.5 15.8 L13.5 20 Q11 22 9.5 20 L9.5 15.8 Z"/>
<path d="M15.5 19.5 Q15 12 17 10 Q18.5 8.5 19.5 10.5 Q21 14 20.5 21 Q18 22.5 15.5 19.5 Z"/>
<path d="M19.5 20 Q19 13 21.5 11.5 Q23.5 10.5 24.5 12.5 Q26 16 25.5 21.5 Q22 23 19.5 20 Z"/>
<path d="M24 20.5 Q23.5 13.5 26 12 Q28 11 29 13 Q30.5 17 30 22 Q27 23.5 24 20.5 Z"/>
<path d="M29 20 Q28.5 13 31 11.5 Q33 10.5 34 12.5 Q35.5 16.5 35 21.5 Q32 23 29 20 Z"/>
<path d="M33.5 19.5 Q33 13 35.5 11.8 Q37.5 11 38.5 13 Q40 16.5 39.5 20.5 L42.5 17.5 L40 21.5 Q37 23 33.5 19.5 Z"/>
</g><g fill="#6d6a6c"><rect x="18" y="14" width="1.3" height="6"/><rect x="27" y="15" width="1.3" height="6"/><rect x="36" y="15" width="1.3" height="5"/></g></svg>
</div></div>
<svg class="a" style="left:488.3px;top:254px" width="41" height="54" viewBox="0 0 41 54">
<defs><linearGradient id="zg" x1="0" y1="0" x2="0" y2="1"><stop offset="0" stop-color="#fdfdfd"/><stop offset="1" stop-color="#f0f0f0"/></linearGradient></defs>
<path d="M0.5 0.5 H27 L40.5 14 V53.5 H0.5 Z" fill="url(#zg)" stroke="#d8d8d8" stroke-width="0.8"/>
<path d="M27 0.5 V11 Q27 14 30 14 H40.5" fill="#e4e4e4" stroke="#d0d0d0" stroke-width="0.8"/>
<rect x="17" y="1" width="7.5" height="29" rx="2" fill="#3a3a3a"/>
<path d="M18.5 3 h4.5 M18.5 6 h4.5 M18.5 9 h4.5 M18.5 12 h4.5 M18.5 15 h4.5 M18.5 18 h4.5 M18.5 21 h4.5 M18.5 24 h4.5 M18.5 27 h4.5" stroke="#bcbcbc" stroke-width="1"/>
<text x="20.2" y="50.3" font-size="8.5" text-anchor="middle" fill="#666" font-family="Liberation Sans">ZIP</text>
</svg>
<div class="a" style="left:589.3px;top:254.9px;width:37.3px;height:52.9px;background:#fff;box-shadow:0 0.5px 1.5px rgba(0,0,0,.35)"><div class="a" style="left:2.5px;top:2.5px;width:32.3px;height:47.9px;background:#d8b9a4">
<div class="a" style="left:13px;top:2px;width:6px;height:6px;border-radius:50%;background:#fff"></div>
<div class="a" style="left:8px;top:11px;width:14px;height:1px;background:#f5eee8"></div>
<div class="a" style="left:3px;top:17px;width:16px;height:2px;background:#4a3a30"></div>
<div class="a" style="left:8px;top:24px;width:16px;height:1px;background:#f5eee8"></div>
<div class="a" style="left:8px;top:31px;width:16px;height:1px;background:#f5eee8"></div>
<div class="a" style="left:10px;top:37px;width:12px;height:1px;background:#f5eee8"></div>
<div class="a" style="left:11px;top:42px;width:10px;height:1px;background:#2a2a2a"></div>
<div class="a" style="left:0;top:43.9px;width:100%;height:3px;background:#222"></div>
</div></div>
</div>
<!--/FINDER-->
</body></html>
